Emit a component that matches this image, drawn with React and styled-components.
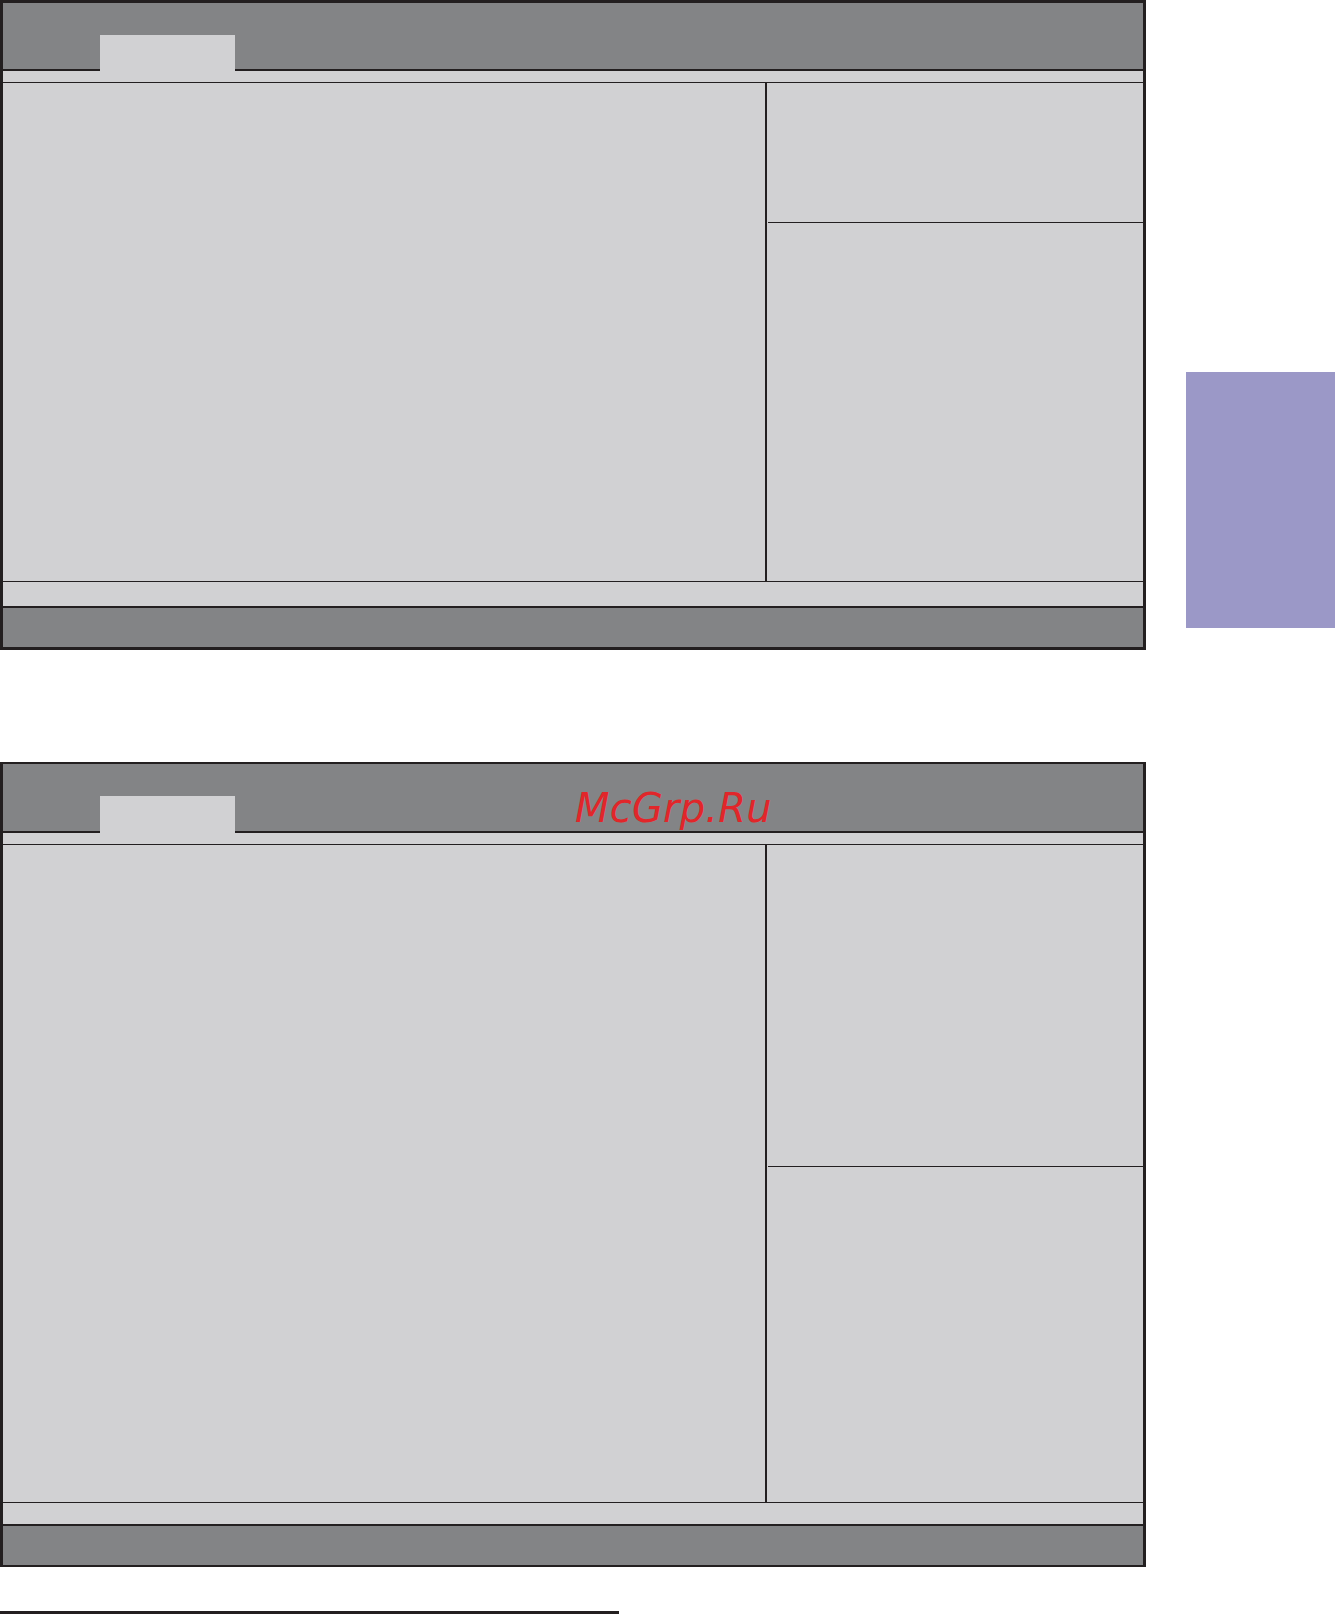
import React from "react";
import styled, { createGlobalStyle } from "styled-components";

const DARK = "#231f20";
const GREY = "#838486";
const LIGHT = "#d1d1d3";
const PURPLE = "#9b98c7";

const Global = createGlobalStyle`
  html, body { margin: 0; padding: 0; background: #ffffff; }
  body { font-family: "DejaVu Sans", "Liberation Sans", sans-serif; }
`;

const Page = styled.div`
  width: 1335px;
  height: 1614px;
  display: flex;
  flex-direction: row;
  align-items: flex-start;
  overflow: hidden;
`;

const Main = styled.div`
  width: 1146px;
  display: flex;
  flex-direction: column;
  flex-shrink: 0;
`;

const Side = styled.div`
  margin-left: 40px;
  flex: 1;
  display: flex;
  flex-direction: column;
`;

const ChapterMarker = styled.div`
  margin-top: 372px;
  height: 256px;
  background: ${PURPLE};
`;

const Frame = styled.section`
  box-sizing: border-box;
  width: 1146px;
  margin-top: ${(p) => p.$gap}px;
  border-left: 3px solid ${DARK};
  border-right: 3px solid ${DARK};
  border-top: ${(p) => p.$edge}px solid ${DARK};
  border-bottom: ${(p) => p.$edge}px solid ${DARK};
  background: ${LIGHT};
  display: flex;
  flex-direction: column;
`;

const Header = styled.header`
  position: relative;
  height: ${(p) => p.$h}px;
  background: ${GREY};
  border-bottom: 2px solid ${DARK};
  display: flex;
  align-items: flex-end;
  padding-left: 97px;
`;

const Tab = styled.div`
  width: 135px;
  height: ${(p) => p.$h}px;
  margin-bottom: -2px;
  background: ${LIGHT};
`;

const Watermark = styled.span`
  position: absolute;
  left: 572px;
  top: 24px;
  font-family: "DejaVu Sans", "Liberation Sans", sans-serif;
  font-style: italic;
  font-size: 40px;
  line-height: 40px;
  letter-spacing: 0.2px;
  color: #e1262a;
  white-space: nowrap;
`;

const Strip = styled.div`
  height: ${(p) => p.$h}px;
  border-bottom: ${(p) => (p.$line ? `1px solid ${DARK}` : "none")};
  border-top: ${(p) => (p.$topLine ? `1px solid ${DARK}` : "none")};
`;

const Body = styled.div`
  height: ${(p) => p.$h}px;
  display: flex;
  flex-direction: row;
`;

const Settings = styled.div`
  width: 762px;
  flex-shrink: 0;
`;

const Help = styled.aside`
  flex: 1;
  border-left: 2px solid ${DARK};
  display: flex;
  flex-direction: column;
`;

const HelpTop = styled.div`
  height: ${(p) => p.$h}px;
  margin-left: 1px;
  border-bottom: 1px solid ${DARK};
`;

const HelpKeys = styled.div`
  flex: 1;
`;

const Footer = styled.footer`
  height: 39px;
  background: ${GREY};
  border-top: 2px solid ${DARK};
`;

const Rule = styled.div`
  margin-top: 44px;
  width: 619px;
  height: 3px;
  background: ${DARK};
`;

function BiosScreen({ gap, edge, headerH, tabH, bodyH, helpH, bottomStrip, watermark }) {
  return (
    <Frame $gap={gap} $edge={edge}>
      <Header $h={headerH}>
        <Tab $h={tabH} />
        {watermark && <Watermark>{watermark}</Watermark>}
      </Header>
      <Strip $h={11} $line />
      <Body $h={bodyH}>
        <Settings />
        <Help>
          <HelpTop $h={helpH} />
          <HelpKeys />
        </Help>
      </Body>
      <Strip $h={bottomStrip} $topLine />
      <Footer />
    </Frame>
  );
}

export default function App() {
  return (
    <>
      <Global />
      <Page>
        <Main>
          <BiosScreen gap={0} edge={3} headerH={66} tabH={36} bodyH={498} helpH={139} bottomStrip={24} />
          <BiosScreen
            gap={112}
            edge={2}
            headerH={67}
            tabH={37}
            bodyH={657}
            helpH={321}
            bottomStrip={21}
            watermark="McGrp.Ru"
          />
          <Rule />
        </Main>
        <Side>
          <ChapterMarker />
        </Side>
      </Page>
    </>
  );
}
